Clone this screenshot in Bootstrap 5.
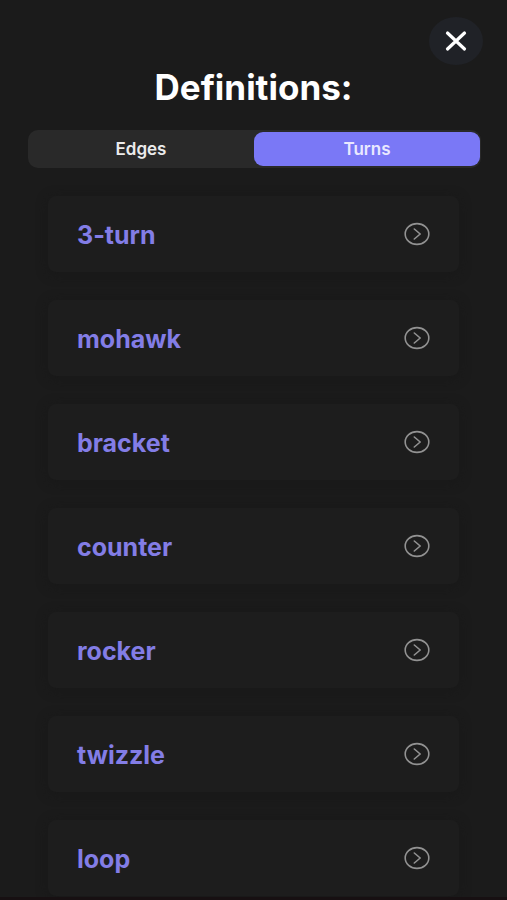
<!DOCTYPE html>
<html lang="en" data-bs-theme="dark">
<head>
<meta charset="utf-8">
<meta name="viewport" content="width=device-width, initial-scale=1">
<title>Definitions</title>
<link href="https://cdn.jsdelivr.net/npm/bootstrap@5.3.0/dist/css/bootstrap.min.css" rel="stylesheet">
<style>
  body { background: #1b1b1b; font-family: Inter, "Liberation Sans", sans-serif; }
  .screen { border-bottom: 3px solid #171012; }
  .topbar { padding: 17px 24px 0; }
  .close-btn { width: 54px; height: 48px; border-radius: 50%; background: #202227; color: #fff; }
  .page-title { font-size: 35px; line-height: 40px; font-weight: 700; color: #fff; margin: 2px 0 23px; }
  .segments { margin: 0 26px 0 28px; padding: 2px 1px 2px 0; border-radius: 10px; background: #292929; }
  .segments .nav-link { height: 34px; padding: 0; border-radius: 9px; font-size: 17px; line-height: 32px; font-weight: 600; color: #ebebeb; }
  .segments .nav-link.active { background: #7a78f6; color: #e9e8ff; }
  .terms { padding: 28px 48px 0; gap: 28px; }
  .term { height: 76px; padding: 0 29px; border-radius: 8px; background: #1d1d1d; box-shadow: 0 2px 10px 2px #191919; color: #837de6; font-size: 25px; line-height: 32px; font-weight: 700; }
  .term span { padding-top: 2px; }
  .term svg { color: #929292; }
</style>
<script src="https://cdn.jsdelivr.net/npm/bootstrap@5.3.0/dist/js/bootstrap.bundle.min.js" defer></script>
</head>
<body>
<svg class="d-none" aria-hidden="true">
  <symbol id="go" viewBox="0 0 26 24">
    <ellipse cx="13" cy="12" rx="11.8" ry="10.4" fill="none" stroke="currentColor" stroke-width="1.6"/>
    <path d="M10.3 7 16.2 12 10.3 17" fill="none" stroke="currentColor" stroke-width="1.6" stroke-linecap="round" stroke-linejoin="round"/>
  </symbol>
</svg>
<main class="screen vh-100 d-flex flex-column overflow-hidden">
  <div class="topbar d-flex justify-content-end">
    <button type="button" class="close-btn btn border-0 p-0 d-flex align-items-center justify-content-center" aria-label="Close">
      <svg width="24" height="22" viewBox="0 0 24 22" aria-hidden="true"><path d="M3.5 3 20.5 19M20.5 3 3.5 19" fill="none" stroke="currentColor" stroke-width="3.2" stroke-linecap="round"/></svg>
    </button>
  </div>
  <h1 class="page-title text-center">Definitions:</h1>
  <div class="segments nav nav-pills nav-fill flex-nowrap" role="tablist">
    <button type="button" class="nav-link w-50" role="tab" aria-selected="false">Edges</button>
    <button type="button" class="nav-link w-50 active" role="tab" aria-selected="true">Turns</button>
  </div>
  <div class="terms d-flex flex-column flex-grow-1 overflow-hidden">
    <a href="#3-turn" class="term d-flex flex-shrink-0 align-items-center justify-content-between text-decoration-none"><span>3-turn</span><svg width="26" height="24" aria-hidden="true"><use href="#go"/></svg></a>
    <a href="#mohawk" class="term d-flex flex-shrink-0 align-items-center justify-content-between text-decoration-none"><span>mohawk</span><svg width="26" height="24" aria-hidden="true"><use href="#go"/></svg></a>
    <a href="#bracket" class="term d-flex flex-shrink-0 align-items-center justify-content-between text-decoration-none"><span>bracket</span><svg width="26" height="24" aria-hidden="true"><use href="#go"/></svg></a>
    <a href="#counter" class="term d-flex flex-shrink-0 align-items-center justify-content-between text-decoration-none"><span>counter</span><svg width="26" height="24" aria-hidden="true"><use href="#go"/></svg></a>
    <a href="#rocker" class="term d-flex flex-shrink-0 align-items-center justify-content-between text-decoration-none"><span>rocker</span><svg width="26" height="24" aria-hidden="true"><use href="#go"/></svg></a>
    <a href="#twizzle" class="term d-flex flex-shrink-0 align-items-center justify-content-between text-decoration-none"><span>twizzle</span><svg width="26" height="24" aria-hidden="true"><use href="#go"/></svg></a>
    <a href="#loop" class="term d-flex flex-shrink-0 align-items-center justify-content-between text-decoration-none"><span>loop</span><svg width="26" height="24" aria-hidden="true"><use href="#go"/></svg></a>
  </div>
</main>
</body>
</html>
